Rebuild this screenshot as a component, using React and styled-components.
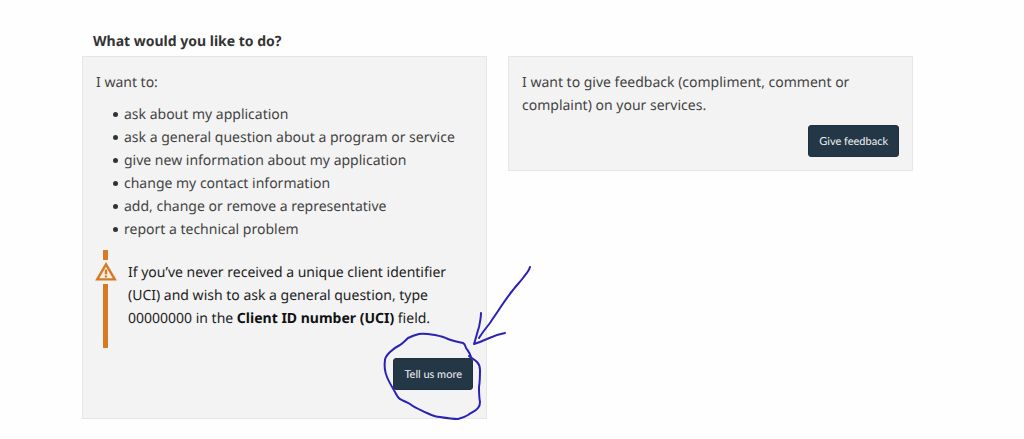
import styled, { createGlobalStyle } from "styled-components";

const requests = [
  "ask about my application",
  "ask a general question about a program or service",
  "give new information about my application",
  "change my contact information",
  "add, change or remove a representative",
  "report a technical problem",
];

export default function App() {
  return (
    <>
      <GlobalStyle />
      <Page>
        <Title>What would you like to do?</Title>
        <Columns>
          <Card $tall>
            <Text>I want to:</Text>
            <List>
              {requests.map((request) => (
                <Item key={request}>{request}</Item>
              ))}
            </List>
            <Alert>
              <AlertMark>
                <BarTop />
                <WarningIcon />
                <BarBottom />
              </AlertMark>
              <AlertText>
                If you’ve never received a unique client identifier (UCI) and
                wish to ask a general question, type 00000000 in the{" "}
                <strong>Client ID number (UCI)</strong> field.
              </AlertText>
            </Alert>
            <Actions>
              <Marked>
                <Button type="button">Tell us more</Button>
                <Scribble />
              </Marked>
            </Actions>
          </Card>
          <Card>
            <Text>
              I want to give feedback (compliment, comment or complaint) on your
              services.
            </Text>
            <Actions>
              <Button type="button">Give feedback</Button>
            </Actions>
          </Card>
        </Columns>
      </Page>
    </>
  );
}

function WarningIcon() {
  return (
    <svg width="22" height="20" viewBox="0 0 22 20" aria-hidden="true">
      <path
        d="M11 2.4 L19.8 17.4 H2.2 Z"
        fill="#f8efe6"
        stroke="#d67a25"
        strokeWidth="2.4"
        strokeLinejoin="miter"
      />
      <path d="M11 7.5 V12.3" stroke="#d67a25" strokeWidth="2.4" />
      <circle cx="11" cy="14.4" r="1.2" fill="#d67a25" />
    </svg>
  );
}

// hand-drawn circle round the button, with an arrow pointing at it
function Scribble() {
  return (
    <Ink viewBox="0 0 160 168" aria-hidden="true">
      <path d="M91 96 C90 92 88 90 86 87 C85 84 85 83 83 82 C78 81 73 80 68 78 C64 76 60 75 55 74 C49 73 43 72 39 73 C35 74 32 75 28 77 C25 80 23 82 20 84 C16 86 13 88 10 91 C7 94 5 96 5 99 C4 105 5 111 7 116 C9 121 12 126 15 131 C17 135 18 137 20 138 C23 140 27 141 30 143 C35 147 41 149 47 152 C51 154 55 156 60 156 C66 157 72 158 78 158 C82 157 85 156 88 154 C92 151 96 150 98 147 C100 145 100 143 100 141 C99 136 99 131 99 126 C100 120 100 114 100 109 C100 105 99 103 97 101 C94 98 91 97 89 95" />
      <path d="M150 6 C149 10 146 13 143 17 C140 21 136 25 133 29 C128 35 124 41 120 47 C117 52 113 57 110 62 C106 67 102 72 99 77" />
      <path d="M101 52 C101 57 100 61 99 66 C97 72 96 77 94 83 C98 82 102 80 107 78 C113 75 119 73 125 72" />
    </Ink>
  );
}

const GlobalStyle = createGlobalStyle`
  * {
    box-sizing: border-box;
  }
  body {
    margin: 0;
    background: #fefefe;
    color: #434343;
    font-family: "Noto Sans", sans-serif;
    font-size: 14px;
    line-height: 23px;
    text-rendering: geometricPrecision;
  }
`;

const Page = styled.main`
  padding: 30px 111px 20px 82px;
`;

const Title = styled.h1`
  margin: 0 0 3px;
  padding-left: 11px;
  font-size: 14px;
  line-height: 23px;
  font-weight: 700;
  color: #333;
`;

const Columns = styled.div`
  display: grid;
  grid-template-columns: 1fr 1fr;
  align-items: start;
  gap: 21px;
`;

const Card = styled.section`
  padding: 14px 13px;
  padding-bottom: ${({ $tall }) => ($tall ? "28px" : "13px")};
  background: #f3f3f3;
  border: 1px solid #e6e6e6;
`;

const Text = styled.p`
  margin: 0 0 8px;
`;

const List = styled.ul`
  margin: 0 0 9px;
  padding: 1px 0 0 17px;
  list-style: none;
`;

const Item = styled.li`
  display: flex;
  align-items: center;
  gap: 6px;
  &::before {
    content: "";
    flex: none;
    width: 5px;
    height: 5px;
    border-radius: 50%;
    background: #333;
  }
`;

const Alert = styled.div`
  display: flex;
  gap: 13px;
  margin-bottom: 10px;
`;

const AlertMark = styled.div`
  display: flex;
  flex-direction: column;
  align-items: center;
  gap: 2px;
  width: 19px;
`;

const BarTop = styled.span`
  width: 5px;
  height: 10px;
  background: #d67a25;
`;

const BarBottom = styled(BarTop)`
  flex: 1;
`;

const AlertText = styled.p`
  flex: 1;
  margin: 0;
  padding: 11px 12px 18px 0;
  color: #222;
  strong {
    color: #111;
  }
`;

const Actions = styled.div`
  display: flex;
  justify-content: flex-end;
`;

const Marked = styled.div`
  position: relative;
`;

const Button = styled.button`
  height: 32px;
  padding: 0 10px;
  border: 1px solid #1f303f;
  border-radius: 3px;
  background: #243746;
  color: #eef2f5;
  font-family: Lato, sans-serif;
  font-size: 11px;
  text-rendering: geometricPrecision;
  cursor: pointer;
`;

const Ink = styled.svg`
  position: absolute;
  top: -97px;
  right: -67px;
  width: 160px;
  height: 168px;
  fill: none;
  stroke: #2a22b4;
  stroke-width: 2;
  stroke-linecap: round;
  stroke-linejoin: round;
  pointer-events: none;
`;
